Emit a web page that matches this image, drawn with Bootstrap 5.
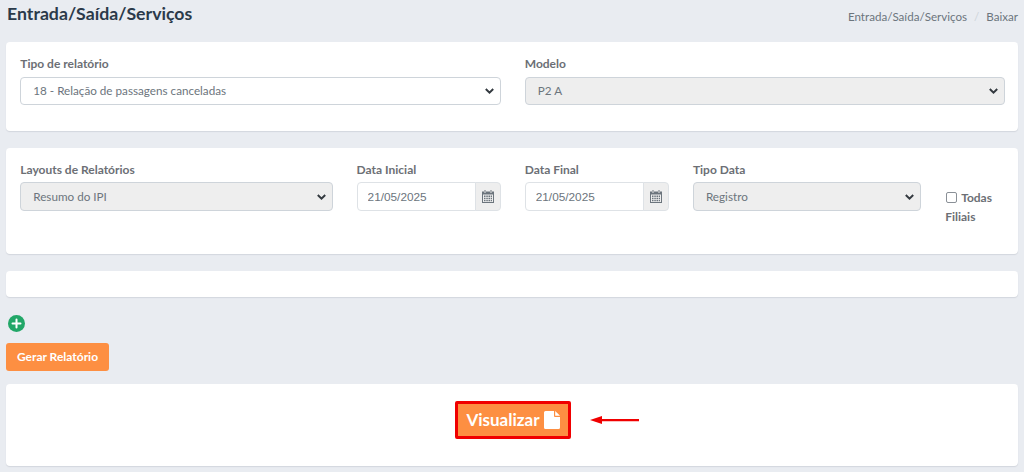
<!doctype html>
<html lang="pt-BR"><head><meta charset="utf-8">
<title>Entrada/Saída/Serviços</title>
<link href="https://cdn.jsdelivr.net/npm/bootstrap@5.3.0/dist/css/bootstrap.min.css" rel="stylesheet">
<style>
html,body{height:472px;overflow:hidden}
body{background:#e9ecf1;font-family:Lato,"Noto Sans",sans-serif;font-size:12px;color:#6c757d;padding:0 6px}
.top-strip{height:3px}
.page-title{font-size:17.700px;font-weight:700;color:#2b3a4a;line-height:22px;margin:0}
.head-row{height:39px;padding-left:1px}
.crumbs{font-size:11.600px;margin:0;padding-top:5px}
.crumbs .breadcrumb-item+.breadcrumb-item{padding-left:7px}
.crumbs .breadcrumb-item+.breadcrumb-item::before{padding-right:7px;color:#ced4da}
.crumbs .breadcrumb-item{color:#6c757d}
.sheet{border:0;border-radius:4px;box-shadow:0 1px 1px rgba(50,60,80,.12);background:#fff}
.sheet-a{height:89px;margin-bottom:17px;padding:15px 12.750px 0 14.250px}
.sheet-b{height:106px;margin-bottom:17px;padding:15px 12.750px 0 14.250px}
.sheet-c{height:26px}
.sheet-d{height:82px;margin-top:13px;padding-top:17px}
.fld-label{font-size:12px;font-weight:700;color:#6c6f75;margin-bottom:6px;line-height:14px;display:block}
.sheet-b .fld-label{margin-bottom:5px}
.fld{height:28px;font-size:11.700px;padding:0 32px 0 12px;border-color:#ced4da;border-radius:4px;color:#6c757d;background-position:right 6px center;background-size:9px 8px;background-image:url("data:image/svg+xml,%3csvg xmlns='http://www.w3.org/2000/svg' viewBox='0 0 9 8'%3e%3cpath fill='none' stroke='%23343a40' stroke-width='2' d='M.8 2l3.700 3.700L8.200 2'/%3e%3c/svg%3e")}
.fld-tall{height:29px}
.fld-off{background-color:#eeeeee}
.date-in{height:29px;font-size:11.800px;font-family:"Liberation Sans",sans-serif;padding:0 10px;color:#6c757d;border-radius:4px}
.date-add{background:#eeeeee;padding:0 6px;width:26px;border-radius:0 4px 4px 0}
.all-wrap{padding-top:25px;font-size:12px;font-weight:700;line-height:19px;color:#6c6f75}
.all-wrap .form-check-input{width:11px;height:11px;margin:0 4px 0 1px;vertical-align:-1px;float:none;border-color:#8a9097;border-radius:2px}
.add-wrap{height:46px;padding:17px 0 0 2px}
.btn-gen{background:#fd8f42;color:#fff;font-size:12px;font-weight:700;height:28px;width:103px;padding:0;border:0;border-radius:3px}
.btn-view{background:#fd8f42;color:#fff;font-size:17px;font-weight:700;width:116px;height:38px;padding:0;border:3px solid #f00000;border-radius:2px}
.view-wrap{position:relative;margin-left:2px}
.arrow-mark{position:absolute;left:135px;top:14px}
</style></head>
<body>
<div class="top-strip"></div>
<div class="head-row d-flex justify-content-between align-items-start">
  <h1 class="page-title">Entrada/Saída/Serviços</h1>
  <nav aria-label="breadcrumb"><ol class="breadcrumb crumbs">
    <li class="breadcrumb-item">Entrada/Saída/Serviços</li>
    <li class="breadcrumb-item active">Baixar</li>
  </ol></nav>
</div>

<div class="card sheet sheet-a"><div class="row">
  <div class="col-6"><label class="fld-label">Tipo de relatório</label>
    <select class="form-select fld"><option>18 - Relação de passagens canceladas</option></select></div>
  <div class="col-6"><label class="fld-label">Modelo</label>
    <select class="form-select fld fld-off"><option>P2 A</option></select></div>
</div></div>

<div class="card sheet sheet-b"><div class="row">
  <div class="col-4"><label class="fld-label">Layouts de Relatórios</label>
    <select class="form-select fld fld-tall fld-off"><option>Resumo do IPI</option></select></div>
  <div class="col-2"><label class="fld-label">Data Inicial</label>
    <div class="input-group"><input class="form-control date-in" value="21/05/2025">
    <span class="input-group-text date-add"><svg width="12" height="13" viewBox="0 0 12 13" fill="#6c757d"><path d="M2.500 0h1v2h-1zM8.500 0h1v2h-1zM0 1.500h2v1h2v-1h4v1h2v-1h2V13H0zM1 4.500V12h10V4.500z"/><path d="M2 5.500h1.500V7H2zM4.300 5.500h1.500V7H4.300zM6.500 5.500H8V7H6.500zM8.700 5.500h1.300V7H8.700zM2 7.800h1.500v1.500H2zM4.300 7.800h1.500v1.500H4.300zM6.500 7.800H8v1.500H6.500zM8.700 7.800h1.300v1.500H8.700zM2 10h1.500v1.300H2zM4.300 10h1.500v1.300H4.300zM6.500 10H8v1.300H6.500zM8.700 10h1.300v1.300H8.700z"/></svg></span></div></div>
  <div class="col-2"><label class="fld-label">Data Final</label>
    <div class="input-group"><input class="form-control date-in" value="21/05/2025">
    <span class="input-group-text date-add"><svg width="12" height="13" viewBox="0 0 12 13" fill="#6c757d"><path d="M2.500 0h1v2h-1zM8.500 0h1v2h-1zM0 1.500h2v1h2v-1h4v1h2v-1h2V13H0zM1 4.500V12h10V4.500z"/><path d="M2 5.500h1.500V7H2zM4.300 5.500h1.500V7H4.300zM6.500 5.500H8V7H6.500zM8.700 5.500h1.300V7H8.700zM2 7.800h1.500v1.500H2zM4.300 7.800h1.500v1.500H4.300zM6.500 7.800H8v1.500H6.500zM8.700 7.800h1.300v1.500H8.700zM2 10h1.500v1.300H2zM4.300 10h1.500v1.300H4.300zM6.500 10H8v1.300H6.500zM8.700 10h1.300v1.300H8.700z"/></svg></span></div></div>
  <div class="col-3"><label class="fld-label">Tipo Data</label>
    <select class="form-select fld fld-tall fld-off"><option>Registro</option></select></div>
  <div class="col-1 all-wrap"><input type="checkbox" class="form-check-input">Todas Filiais</div>
</div></div>

<div class="card sheet sheet-c"></div>

<div class="add-wrap"><svg width="17" height="17" viewBox="0 0 17 17"><circle cx="8.500" cy="8.500" r="8.500" fill="#22a768"/><path d="M8.500 4.500v8M4.500 8.500h8" stroke="#fff" stroke-width="2" stroke-linecap="round"/></svg></div>
<button type="button" class="btn btn-gen d-block">Gerar Relatório</button>

<div class="card sheet sheet-d d-flex flex-row justify-content-center align-items-start">
  <div class="view-wrap">
  <button type="button" class="btn btn-view d-inline-flex align-items-center justify-content-center gap-1">Visualizar
    <svg width="16" height="18" viewBox="0 0 16 18"><path d="M0 1.500A1.500 1.500 0 0 1 1.500 0H10v5a1 1 0 0 0 1 1h5v10.500a1.500 1.500 0 0 1-1.500 1.500h-13A1.500 1.500 0 0 1 0 16.500z" fill="#fff"/><path d="M11.200 0 16 4.800H11.200z" fill="#fff"/></svg></button>
  <svg class="arrow-mark" width="49" height="10" viewBox="0 0 49 10"><path d="M0 5 12 1v3h37v2.200H12V9z" fill="#f00000"/></svg>
  </div>
</div>
<script src="https://cdn.jsdelivr.net/npm/bootstrap@5.3.0/dist/js/bootstrap.bundle.min.js"></script>
</body></html>
